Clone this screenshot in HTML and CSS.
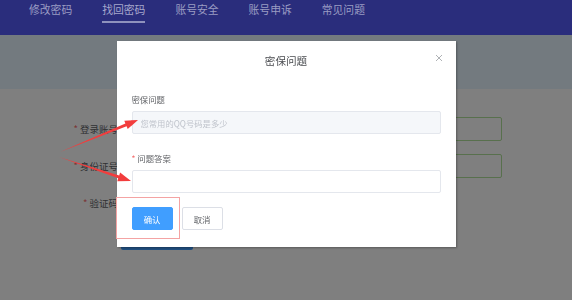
FILE: index.html
```html
<!DOCTYPE html>
<html lang="zh-CN">
<head>
  <meta charset="UTF-8" />
  <meta name="viewport" content="width=device-width, initial-scale=1.0"/>
  <title>找回密码</title>
  <link rel="stylesheet" href="styles.css">
</head>
<body>

<div class="topbar">
  <a class="nav-item">修改密码</a>
  <a class="nav-item active">找回密码</a>
  <a class="nav-item">账号安全</a>
  <a class="nav-item">账号申诉</a>
  <a class="nav-item">常见问题</a>
</div>

<div class="band"></div>

<div class="form">
  <div class="form-row">
    <label class="form-label"><span class="req">*</span> 登录账号</label>
    <div class="form-input"></div>
  </div>
  <div class="form-row">
    <label class="form-label"><span class="req">*</span> 身份证号</label>
    <div class="form-input"></div>
  </div>
  <div class="form-row">
    <label class="form-label"><span class="req">*</span> 验证码</label>
    <div class="form-input code"></div>
  </div>
  <button class="btn-next" type="button">下一步</button>
</div>

<!-- 密保问题弹窗 -->
<div class="mask">
  <div class="dialog">
    <div class="dialog-header">
      <span class="dialog-title">密保问题</span>
      <svg class="dialog-close" width="8" height="8" viewBox="0 0 8 8">
        <path d="M1 1 L7 7 M7 1 L1 7" stroke="#a6a9ad" stroke-width="0.9" fill="none"/>
      </svg>
    </div>
    <div class="dialog-body">
      <div class="field">
        <div class="field-label">密保问题</div>
        <input class="field-input disabled" type="text" placeholder="您常用的QQ号码是多少" disabled>
      </div>
      <div class="field">
        <div class="field-label"><span class="req">*</span> 问题答案</div>
        <input class="field-input" type="text">
      </div>
      <div class="dialog-footer">
        <button class="btn primary" type="button">确认</button>
        <button class="btn" type="button">取消</button>
      </div>
    </div>
  </div>
</div>

<!-- 标注 -->
<svg class="marks" width="572" height="300" viewBox="0 0 572 300">
  <rect x="116.5" y="197.5" width="63" height="41" fill="none" stroke="#f4a3a3" stroke-width="1"/>
  <polygon points="60,152 126.6,126.3 127.7,129.1 138,120 124.3,120.7 125.4,123.5" fill="#f23d3d"/>
  <polygon points="59,157 119.2,175.5 120.1,172.6 131,181 117.3,181.2 118.2,178.3" fill="#f23d3d"/>
</svg>

</body>
</html>
```

FILE: styles.css
```css
body {
  margin: 0;
  font-family: "Noto Sans CJK SC", "Noto Sans", sans-serif;
  background: #fff;
  color: #303133;
}

.topbar {
  height: 35px;
  background: #2a2d7c;
  display: flex;
  gap: 30px;
  padding-left: 29px;
  box-sizing: border-box;
}

.nav-item {
  display: block;
  font-size: 10.8px;
  line-height: 13px;
  padding: 3px 0 5px;
  height: 13px;
  color: #9a9cc3;
  border-bottom: 2px solid transparent;
}

.nav-item.active {
  color: #a6a8cc;
  border-bottom-color: #8f92bd;
}

.band {
  height: 54px;
  background: #e6f4ff;
}

/* 页面上的表单（被遮罩盖住） */
.form {
  padding-top: 28px;
}

.form-row {
  display: flex;
  align-items: center;
  height: 24px;
  margin-bottom: 13px;
}

.form-label {
  width: 118px;
  padding-right: 12px;
  text-align: right;
  font-size: 9.5px;
  color: #606266;
}

.req {
  color: #f56c6c;
}

.form-input {
  width: 372px;
  height: 24px;
  box-sizing: border-box;
  border: 1px solid #b0e19a;
  border-radius: 2px;
}

.form-input.code {
  width: 200px;
  border-color: #dcdfe6;
}

.btn-next {
  display: block;
  margin: -2px 0 0 121px;
  width: 72px;
  height: 24px;
  border: none;
  border-radius: 2px;
  background: #409eff;
}

/* 遮罩 + 弹窗 */
.mask {
  position: fixed;
  top: 35px;
  left: 0;
  right: 0;
  bottom: 0;
  background: rgba(0, 0, 0, 0.5);
}

.dialog {
  width: 339px;
  margin: 6px auto 0;
  background: #fff;
  box-shadow: 1px 1px 2px rgba(0, 0, 0, 0.3);
}

.dialog-header {
  position: relative;
  padding-top: 13px;
  text-align: center;
}

.dialog-title {
  display: block;
  font-size: 10.6px;
  line-height: 14px;
  color: #4a4c50;
}

.dialog-close {
  position: absolute;
  top: 13px;
  right: 13px;
}

.dialog-body {
  padding: 25px 15px 17px;
}

.field {
  margin-bottom: 18px;
}

.field-label {
  font-size: 8.4px;
  line-height: 12px;
  height: 12px;
  margin-bottom: 6px;
  color: #606266;
}

.field-input {
  display: block;
  width: 100%;
  height: 23px;
  box-sizing: border-box;
  padding: 0 8px;
  border: 1px solid #e4e7ed;
  border-radius: 2px;
  background: #fff;
  font-family: inherit;
  font-size: 8.3px;
  outline: none;
}

.field-input.disabled {
  background: #f5f7fa;
}

.field-input::placeholder {
  color: #c0c4cc;
}

.dialog-footer {
  display: flex;
  gap: 9px;
  margin-top: -4px;
}

.btn {
  width: 41px;
  height: 23px;
  border: 1px solid #dcdfe6;
  border-radius: 2px;
  background: #fff;
  color: #606266;
  font-family: inherit;
  font-size: 8.4px;
  padding: 0;
}

.btn.primary {
  background: #409eff;
  border-color: #409eff;
  color: #fff;
}

.marks {
  position: fixed;
  top: 0;
  left: 0;
}
```
